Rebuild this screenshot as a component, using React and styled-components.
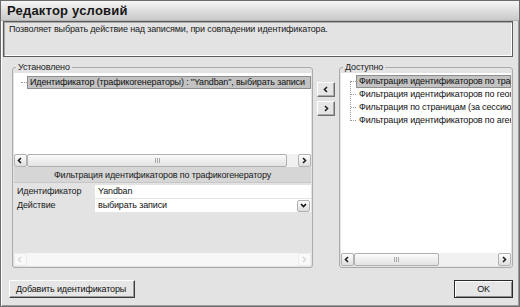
import React from "react";
import styled, { createGlobalStyle } from "styled-components";

const GlobalStyle = createGlobalStyle`
  html, body {
    margin: 0;
    padding: 0;
    background: #e3e3e3;
  }
  body {
    font-family: "Liberation Sans", Arial, sans-serif;
    font-size: 9px;
    letter-spacing: -0.15px;
    color: #000;
  }
`;

const Window = styled.div`
  width: 520px;
  height: 307px;
  box-sizing: border-box;
  border: 1px solid #6c6c6c;
  box-shadow: inset 1px 1px 0 #ffffff, inset -1px -1px 0 #9a9a9a;
  background: #e3e3e3;
  display: flex;
  flex-direction: column;
  overflow: hidden;
`;

const TitleBar = styled.div`
  height: 19px;
  flex: none;
  display: flex;
  align-items: center;
  padding-left: 6px;
  background: linear-gradient(#f6f6f6, #dcdcdc 55%, #c9c9c9);
  border-bottom: 1px solid #b4b4b4;
  font-size: 13px;
  font-weight: bold;
  color: #161616;
  letter-spacing: 0.2px;
`;

const Body = styled.div`
  flex: 1;
  display: flex;
  flex-direction: column;
  padding: 0 6px 0 2px;
`;

const Description = styled.div`
  height: 36px;
  box-sizing: border-box;
  flex: none;
  border: 1px solid #5c5c5c;
  box-shadow: inset 1px 1px 0 #a8a8a8, inset -1px -1px 0 #ffffff;
  padding: 1px 5px;
  line-height: 12px;
  color: #1a1a1a;
`;

const MainRow = styled.div`
  display: flex;
  margin-top: 4px;
  height: 207px;
`;

const Group = styled.fieldset`
  margin: 0 0 0 ${(p) => p.$offset}px;
  width: ${(p) => p.$width}px;
  box-sizing: border-box;
  padding: 0 1px 1px 1px;
  border: 1px solid #ababab;
  border-radius: 3px;
  display: flex;
  flex-direction: column;
  min-width: 0;
`;

const Legend = styled.legend`
  margin-left: ${(p) => p.$indent}px;
  padding: 0 2px;
  line-height: 12px;
  color: #1a1a1a;
`;

const TreeArea = styled.div`
  background: #ffffff;
  flex: ${(p) => (p.$grow ? 1 : "none")};
  height: ${(p) => (p.$grow ? "auto" : `${p.$height}px`)};
  padding-top: ${(p) => p.$top}px;
  box-sizing: border-box;
  overflow: hidden;
  position: relative;
`;

const TreeItem = styled.div`
  position: relative;
  height: 13px;
  line-height: 11px;
  margin-left: ${(p) => p.$indent}px;
  padding-left: 2px;
  white-space: nowrap;
  box-sizing: border-box;
  background: ${(p) => (p.$selected ? "#c3c3c3" : "transparent")};
  border: 1px solid ${(p) => (p.$selected ? "#8e8e8e" : "transparent")};
  color: #111;

  &::before {
    content: "";
    position: absolute;
    left: -${(p) => p.$tick}px;
    top: 5px;
    width: ${(p) => p.$tick - 1}px;
    border-top: 1px dotted #9a9a9a;
  }
`;

const TreeRail = styled.div`
  position: absolute;
  left: ${(p) => p.$x}px;
  top: ${(p) => p.$top}px;
  height: ${(p) => p.$height}px;
  border-left: 1px dotted #9a9a9a;
`;

const ScrollBar = styled.div`
  display: flex;
  height: 13px;
  flex: none;
  background: ${(p) => (p.$disabled ? "#f7f7f7" : "#f1f1f1")};
`;

const ScrollArrow = styled.div`
  width: 13px;
  flex: none;
  box-sizing: border-box;
  display: flex;
  align-items: center;
  justify-content: center;
  border: 1px solid ${(p) => (p.$disabled ? "#ececec" : "#b2b2b2")};
  border-radius: 2px;
  background: ${(p) =>
    p.$disabled ? "#f9f9f9" : "linear-gradient(#fdfdfd, #dedede)"};
  color: ${(p) => (p.$disabled ? "#d8d8d8" : "#1e1e1e")};
`;

const Thumb = styled.div`
  width: ${(p) => p.$width}px;
  flex: none;
  box-sizing: border-box;
  border: 1px solid #b0b0b0;
  border-radius: 2px;
  background: linear-gradient(#fbfbfb, #e2e2e2);
  display: flex;
  align-items: center;
  justify-content: center;
`;

const Grip = styled.div`
  width: 5px;
  height: 5px;
  background: repeating-linear-gradient(
    90deg,
    #a8a8a8 0 1px,
    transparent 1px 2px
  );
`;

const Track = styled.div`
  flex: 1;
`;

const GridHeader = styled.div`
  height: 16px;
  flex: none;
  display: flex;
  align-items: center;
  justify-content: center;
  background: #d6d6d6;
  border-bottom: 1px solid #c6c6c6;
  box-sizing: border-box;
  color: #1a1a1a;
  margin-bottom: 2px;
`;

const GridRow = styled.div`
  display: grid;
  grid-template-columns: 81px 1fr;
  height: 14px;
  flex: none;
`;

const GridLabel = styled.div`
  padding-left: 3px;
  line-height: 13px;
  color: #1a1a1a;
`;

const GridValue = styled.div`
  background: #ffffff;
  border-bottom: 1px solid #e4e4e4;
  display: flex;
  align-items: center;
  justify-content: space-between;
  padding-left: 3px;
  line-height: 13px;
  color: #111;
`;

const DropButton = styled.div`
  width: 13px;
  height: 12px;
  box-sizing: border-box;
  margin-right: 1px;
  border: 1px solid #b2b2b2;
  border-radius: 2px;
  background: linear-gradient(#fdfdfd, #dcdcdc);
  display: flex;
  align-items: center;
  justify-content: center;
`;

const GridFill = styled.div`
  flex: 1;
`;

const ArrowColumn = styled.div`
  width: 26px;
  flex: none;
  display: flex;
  flex-direction: column;
  gap: 4px;
  padding: 21px 0 0 4px;
  box-sizing: border-box;
`;

const SmallButton = styled.div`
  width: 18px;
  height: 15px;
  box-sizing: border-box;
  display: flex;
  align-items: center;
  justify-content: center;
  background: #e6e6e6;
  border: 1px solid;
  border-color: #ffffff #6e6e6e #6e6e6e #ffffff;
  box-shadow: inset -1px -1px 0 #a8a8a8;
  color: #222;
`;

const Footer = styled.div`
  display: flex;
  justify-content: space-between;
  margin-top: 12px;
  padding-left: 6px;
`;

const Button = styled.div`
  width: ${(p) => p.$width}px;
  height: 18px;
  box-sizing: border-box;
  display: flex;
  align-items: center;
  white-space: nowrap;
  justify-content: ${(p) => (p.$center ? "center" : "flex-start")};
  padding-left: ${(p) => (p.$center ? 0 : 6)}px;
  background: #e6e6e6;
  border: 1px solid;
  border-color: ${(p) =>
    p.$default
      ? "#2a2a2a"
      : "#ffffff #3c3c3c #3c3c3c #ffffff"};
  box-shadow: ${(p) =>
    p.$default
      ? "inset 1px 1px 0 #ffffff, inset -1px -1px 0 #8c8c8c"
      : "inset -1px -1px 0 #9c9c9c"};
  color: #111;
`;

const Chevron = ({ dir }) => {
  const pts = {
    left: "4,1 1.5,3.5 4,6",
    right: "2,1 4.5,3.5 2,6",
    down: "1,2 3.5,4.5 6,2",
  }[dir];
  return (
    <svg width="7" height="7" viewBox="0 0 7 7">
      <polyline points={pts} fill="none" stroke="currentColor" strokeWidth="1.6" />
    </svg>
  );
};

const HScroll = ({ thumb, disabled }) => (
  <ScrollBar $disabled={disabled}>
    <ScrollArrow $disabled={disabled}>
      <Chevron dir="left" />
    </ScrollArrow>
    {thumb ? (
      <Thumb $width={thumb}>
        <Grip />
      </Thumb>
    ) : null}
    <Track />
    <ScrollArrow $disabled={disabled}>
      <Chevron dir="right" />
    </ScrollArrow>
  </ScrollBar>
);

const available = [
  "Фильтрация идентификаторов по трафикогенератору",
  "Фильтрация идентификаторов по географии",
  "Фильтрация по страницам (за сессию)",
  "Фильтрация идентификаторов по агентам",
];

export default function App() {
  return (
    <>
      <GlobalStyle />
      <Window>
        <TitleBar>Редактор условий</TitleBar>
        <Body>
          <Description>
            Позволяет выбрать действие над записями, при совпадении идентификатора.
          </Description>

          <MainRow>
            <Group $offset={9} $width={301}>
              <Legend $indent={2}>Установлено</Legend>
              <TreeArea $height={81} $top={3}>
                <TreeItem $indent={13} $tick={7} $selected>
                  Идентификатор (трафикогенераторы) : "Yandban", выбирать записи
                </TreeItem>
              </TreeArea>
              <HScroll thumb={260} />
              <GridHeader>Фильтрация идентификаторов по трафикогенератору</GridHeader>
              <GridRow>
                <GridLabel>Идентификатор</GridLabel>
                <GridValue>Yandban</GridValue>
              </GridRow>
              <GridRow>
                <GridLabel>Действие</GridLabel>
                <GridValue>
                  выбирать записи
                  <DropButton>
                    <Chevron dir="down" />
                  </DropButton>
                </GridValue>
              </GridRow>
              <GridFill />
              <HScroll disabled />
            </Group>

            <ArrowColumn>
              <SmallButton>
                <Chevron dir="left" />
              </SmallButton>
              <SmallButton>
                <Chevron dir="right" />
              </SmallButton>
            </ArrowColumn>

            <Group $offset={0} $width={174}>
              <Legend $indent={2}>Доступно</Legend>
              <TreeArea $grow $top={2}>
                <TreeRail $x={9} $top={8} $height={40} />
                {available.map((name, i) => (
                  <TreeItem key={name} $indent={15} $tick={6} $selected={i === 0}>
                    {name}
                  </TreeItem>
                ))}
              </TreeArea>
              <HScroll thumb={85} />
            </Group>
          </MainRow>

          <Footer>
            <Button $width={126}>Добавить идентификаторы</Button>
            <Button $width={59} $center $default>
              OK
            </Button>
          </Footer>
        </Body>
      </Window>
    </>
  );
}
